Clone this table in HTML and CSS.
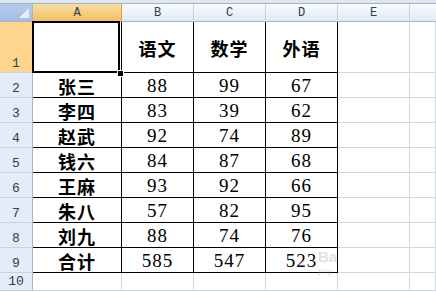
FILE: index.html
```html
<!DOCTYPE html>
<html>
<head>
<meta charset="utf-8">
<link rel="stylesheet" href="styles.css">
</head>
<body>
<div class="sheet">
  <div class="strip"></div>
  <div class="grid">
    <div class="corner"><span class="tri"></span></div>
    <div class="ch sel">A</div>
    <div class="ch">B</div>
    <div class="ch">C</div>
    <div class="ch">D</div>
    <div class="ch">E</div>
    <div class="ch last"></div>

    <div class="rh sel">1</div>
    <div class="c t"></div>
    <div class="c t zh">语文</div>
    <div class="c t zh">数学</div>
    <div class="c t zh">外语</div>
    <div class="c"></div>
    <div class="c"></div>

    <div class="rh">2</div>
    <div class="c t zh">张三</div>
    <div class="c t n">88</div>
    <div class="c t n">99</div>
    <div class="c t n">67</div>
    <div class="c"></div>
    <div class="c"></div>

    <div class="rh">3</div>
    <div class="c t zh">李四</div>
    <div class="c t n">83</div>
    <div class="c t n">39</div>
    <div class="c t n">62</div>
    <div class="c"></div>
    <div class="c"></div>

    <div class="rh">4</div>
    <div class="c t zh">赵武</div>
    <div class="c t n">92</div>
    <div class="c t n">74</div>
    <div class="c t n">89</div>
    <div class="c"></div>
    <div class="c"></div>

    <div class="rh">5</div>
    <div class="c t zh">钱六</div>
    <div class="c t n">84</div>
    <div class="c t n">87</div>
    <div class="c t n">68</div>
    <div class="c"></div>
    <div class="c"></div>

    <div class="rh">6</div>
    <div class="c t zh">王麻</div>
    <div class="c t n">93</div>
    <div class="c t n">92</div>
    <div class="c t n">66</div>
    <div class="c"></div>
    <div class="c"></div>

    <div class="rh">7</div>
    <div class="c t zh">朱八</div>
    <div class="c t n">57</div>
    <div class="c t n">82</div>
    <div class="c t n">95</div>
    <div class="c"></div>
    <div class="c"></div>

    <div class="rh">8</div>
    <div class="c t zh">刘九</div>
    <div class="c t n">88</div>
    <div class="c t n">74</div>
    <div class="c t n">76</div>
    <div class="c"></div>
    <div class="c"></div>

    <div class="rh">9</div>
    <div class="c t zh">合计</div>
    <div class="c t n">585</div>
    <div class="c t n">547</div>
    <div class="c t n">523</div>
    <div class="c"></div>
    <div class="c"></div>

    <div class="rh">10</div>
    <div class="c"></div>
    <div class="c"></div>
    <div class="c"></div>
    <div class="c"></div>
    <div class="c"></div>
    <div class="c"></div>
  </div>
  <div class="selection"></div>
  <div class="handle"></div>
  <div class="mark">Ba<span class="mark-sub">jing</span></div>
</div>
</body>
</html>
```
FILE: styles.css
```css
html, body {
  margin: 0;
  padding: 0;
  background: #ffffff;
}
.sheet {
  position: relative;
  width: 436px;
  height: 292px;
  overflow: hidden;
  background: #ffffff;
}
.strip {
  height: 3px;
  background: #dfe6ef;
  border-bottom: 1px solid #9fb5cf;
}
.grid {
  display: grid;
  grid-template-columns: 33px 89px 72px 72px 72px 72px 1fr;
  grid-template-rows: 18px 51px repeat(8, 25px) 18px;
}
.grid > div {
  box-sizing: border-box;
}
.corner {
  position: relative;
  background: linear-gradient(#b6cbe9, #a4bde2);
  border-right: 1px solid #9eb6ce;
  border-bottom: 1px solid #9eb6ce;
}
.tri {
  position: absolute;
  right: 3px;
  bottom: 3px;
  width: 0;
  height: 0;
  border-left: 10px solid transparent;
  border-bottom: 10px solid #e8eef7;
}
.ch {
  background: linear-gradient(#f9fbfd, #e2e9f3);
  border-right: 1px solid #c3d1e2;
  border-bottom: 1px solid #9eb6ce;
  font-family: "Liberation Mono", monospace;
  font-size: 12px;
  color: #2b3f55;
  display: flex;
  align-items: center;
  justify-content: center;
}
.ch.sel {
  background: linear-gradient(#f9dca4, #f1c162);
  border-right: 1px solid #f29b3a;
  border-bottom: 1px solid #f29b3a;
}
.ch.last {
  border-right: none;
}
.rh {
  background: #e4ecf7;
  border-right: 1px solid #9eb6ce;
  border-bottom: 1px solid #c5d3e5;
  font-family: "Liberation Mono", monospace;
  font-size: 13px;
  color: #2b3f55;
  display: flex;
  align-items: flex-end;
  justify-content: center;
  padding-bottom: 1px;
}
.rh.sel {
  background: #ffd58d;
  border-right: 1px solid #f29b3a;
}
.c {
  border-right: 1px solid #d0d7e5;
  border-bottom: 1px solid #d0d7e5;
  display: flex;
  align-items: center;
  justify-content: center;
  color: #000000;
}
.c.t {
  border-right: 1px solid #000000;
  border-bottom: 1px solid #000000;
  padding-top: 2px;
}
.zh {
  font-family: "Noto Sans CJK SC", sans-serif;
  font-weight: 700;
  font-size: 18px;
  letter-spacing: 1px;
}
.n {
  font-family: "Liberation Serif", serif;
  font-size: 19px;
  letter-spacing: 1px;
}
.selection {
  position: absolute;
  left: 32px;
  top: 21px;
  width: 88px;
  height: 52px;
  box-sizing: border-box;
  border: 2px solid #000000;
}
.handle {
  position: absolute;
  left: 117px;
  top: 70px;
  width: 5px;
  height: 5px;
  background: #000000;
  border: 1px solid #ffffff;
}
.mark {
  position: absolute;
  left: 318px;
  top: 249px;
  font-family: "Liberation Sans", sans-serif;
  font-size: 15px;
  font-weight: 700;
  color: rgba(170, 170, 170, 0.35);
  line-height: 1;
}
.mark-sub {
  display: block;
  font-size: 8px;
  margin-top: 4px;
}
```
